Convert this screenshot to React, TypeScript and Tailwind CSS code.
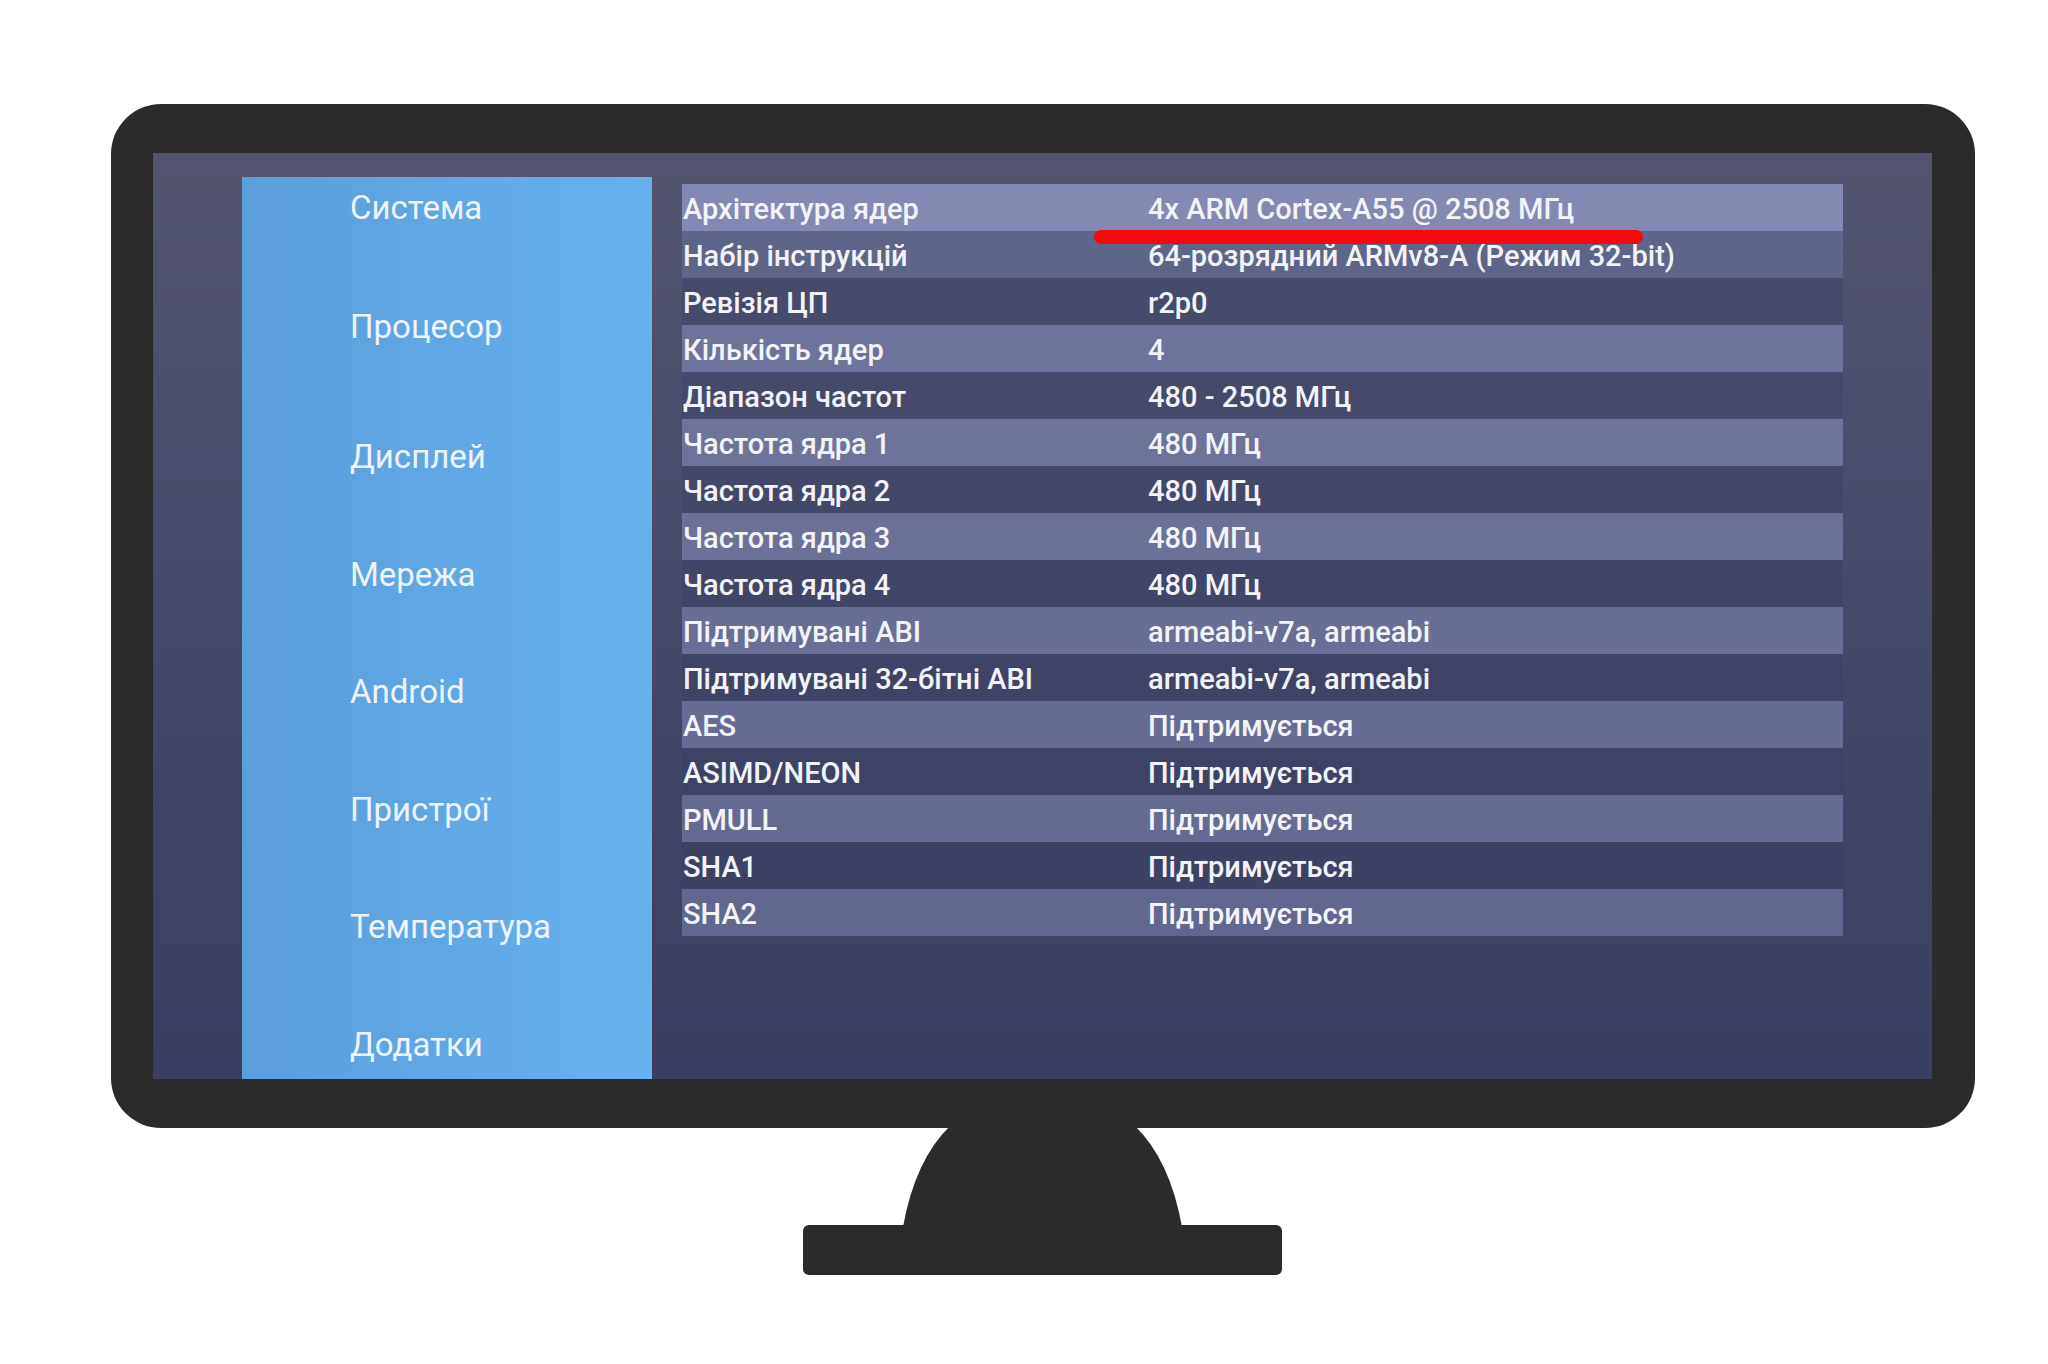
import React from "react"

// sidebar entries, gap above each one taken from the photo
const menu = [
  { name: "Система", gap: "mt-0" },
  { name: "Процесор", gap: "mt-[78.5px]" },
  { name: "Дисплей", gap: "mt-[90.5px]" },
  { name: "Мережа", gap: "mt-[78px]" },
  { name: "Android", gap: "mt-[77px]" },
  { name: "Пристрої", gap: "mt-[78px]" },
  { name: "Температура", gap: "mt-[77px]" },
  { name: "Додатки", gap: "mt-[78px]" },
]

// tone per row, written out so Tailwind picks every class up
const rows = [
  { label: "Архітектура ядер", value: "4x ARM Cortex-A55 @ 2508 МГц", tone: "bg-[#8389b2]" },
  { label: "Набір інструкцій", value: "64-розрядний ARMv8-A (Режим 32-bit)", tone: "bg-[#5f6589]" },
  { label: "Ревізія ЦП", value: "r2p0", tone: "bg-[#464a6b]" },
  { label: "Кількість ядер", value: "4", tone: "bg-[#6d739a]" },
  { label: "Діапазон частот", value: "480 - 2508 МГц", tone: "bg-[#45496a]" },
  { label: "Частота ядра 1", value: "480 МГц", tone: "bg-[#6e7499]" },
  { label: "Частота ядра 2", value: "480 МГц", tone: "bg-[#434869]" },
  { label: "Частота ядра 3", value: "480 МГц", tone: "bg-[#6b7197]" },
  { label: "Частота ядра 4", value: "480 МГц", tone: "bg-[#414667]" },
  { label: "Підтримувані ABI", value: "armeabi-v7a, armeabi", tone: "bg-[#686e95]" },
  { label: "Підтримувані 32-бітні ABI", value: "armeabi-v7a, armeabi", tone: "bg-[#3f4466]" },
  { label: "AES", value: "Підтримується", tone: "bg-[#666c93]" },
  { label: "ASIMD/NEON", value: "Підтримується", tone: "bg-[#3e4365]" },
  { label: "PMULL", value: "Підтримується", tone: "bg-[#646a91]" },
  { label: "SHA1", value: "Підтримується", tone: "bg-[#3d4264]" },
  { label: "SHA2", value: "Підтримується", tone: "bg-[#61678f]" },
]

function Stand() {
  return (
    <svg width="480" height="150" viewBox="0 0 480 150" className="block ml-[692px] -mt-[2px]">
      {/* neck */}
      <path d="M147 0 L332 0 Q367 34 379 101 L100 101 Q112 34 147 0 Z" fill="#2b2b2b" />
      {/* base */}
      <rect x="0" y="99" width="479" height="50" rx="6" fill="#2b2b2b" />
    </svg>
  )
}

export default function App() {
  return (
    <div className="min-h-screen w-[2048px] bg-white pt-[104px] pl-[111px] font-['Roboto','Noto_Sans',sans-serif]">
      {/* Monitor frame */}
      <div className="w-[1864px] h-[1024px] rounded-[50px] bg-[#2b2b2b] pt-[49px] pb-[49px] pl-[42px] pr-[43px]">
        {/* Screen */}
        <div className="flex h-full pt-[24px] pl-[89px] bg-linear-to-b from-[#53556f] via-[#464a69] to-[#3a3e60]">
          {/* Sidebar */}
          <div className="w-[410px] shrink-0 flex flex-col pt-[11px] pl-[108px] bg-linear-to-r from-[#5a9edb] to-[#66b2ef]">
            {menu.map((item) => (
              <div key={item.name} className={`h-[40px] text-[33px] leading-[40px] text-[#eef4fb] ${item.gap}`}>
                {item.name}
              </div>
            ))}
          </div>

          {/* Info table */}
          <div className="relative ml-[30px] mt-[7px] w-[1161px] self-start">
            {rows.map((row) => (
              <div key={row.label} className={`flex h-[47px] pt-[3px] text-[29px] font-medium leading-[44px] text-[#f3f3f7] ${row.tone}`}>
                <div className="w-[466px] pl-[1px] whitespace-nowrap">{row.label}</div>
                <div className="whitespace-nowrap">{row.value}</div>
              </div>
            ))}

            {/* red underline mark */}
            <div className="absolute left-[412px] top-[46px] w-[549px] h-[14px] rounded-full bg-[#f40a0a]"></div>
          </div>
        </div>
      </div>

      <Stand />
    </div>
  )
}
